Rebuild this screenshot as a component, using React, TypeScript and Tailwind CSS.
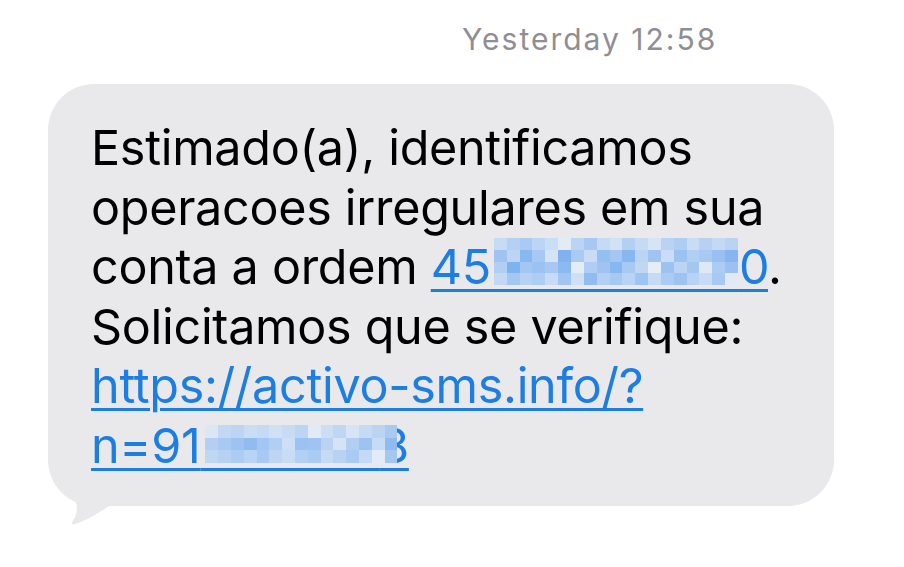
const LINK = '#1c7de3'

const MOSAIC_A = [
  ['#c6dcf6', '#b4d0f3', '#a9caf3', '#bcd5f4', '#c9ddf6', '#e3ebf4', '#bcd4f3', '#a7c8f2', '#c5dbf5', '#d2e2f5', '#b3cff3', '#c4daf5', '#d6e4f5', '#b9d3f4', '#aecdf3', '#c9dcf5', '#b7d1f3', '#c3d9f5', '#bad3f3'],
  ['#9fc4f2', '#bdd5f4', '#88b8f0', '#a6c8f2', '#d5e3f5', '#7fb2ef', '#a9caf3', '#cadcf5', '#94bff1', '#a3c6f2', '#86b7f0', '#bcd4f4', '#a0c4f2', '#cadcf6', '#9cc2f1', '#b1cef3', '#a7c9f2', '#98c0f1', '#86b6ef'],
  ['#b1cef3', '#7fb3f0', '#a3c6f2', '#9bc2f1', '#a6c8f2', '#8cbaf0', '#e4ecf5', '#b0cdf3', '#9fc4f2', '#86b7f0', '#a8c9f2', '#c0d7f4', '#e6edf5', '#9cc2f1', '#bcd4f4', '#a4c7f2', '#dfe9f5', '#acccf3', '#9ac1f1'],
  ['#c2d8f5', '#a4c7f2', '#b6d1f3', '#aecdf3', '#c7dbf5', '#a1c5f2', '#cfe0f5', '#90bcf0', '#b4cff3', '#a6c8f2', '#b9d3f4', '#a0c4f2', '#c4daf5', '#aacbf3', '#9ec3f2', '#b8d2f3', '#c7dbf5', '#a8c9f2', '#e0e9f5'],
]

const MOSAIC_B = [
  ['#dbe7f5', '#c2d8f5', '#bcd5f4', '#c9ddf6', '#c5dbf5', '#d1e1f5', '#c7dbf5', '#bdd5f4', '#e1eaf5', '#cbdef5', '#c0d7f4', '#d6e4f5', '#c4daf5', '#bcd4f4', '#a7c9f2'],
  ['#b4cff3', '#a7c9f2', '#9ec3f2', '#90bcf0', '#a3c6f2', '#b1cef3', '#cddff6', '#9cc2f1', '#a0c4f2', '#bad3f3', '#d5e3f5', '#b2cef3', '#9dc3f2', '#c6dbf5', '#8ebbf0'],
  ['#c0d7f4', '#b7d1f3', '#acccf3', '#b9d3f4', '#a8c9f2', '#bed6f4', '#c8dcf5', '#b3cff3', '#aacbf3', '#c5dbf5', '#b9d2f3', '#a9caf3', '#c4daf5', '#e3ebf5', '#a3c6f2'],
]

// pixelated block laid over the hidden digits
function Mosaic({ rows, className }: { rows: string[][]; className: string }) {
  return (
    <span className={`absolute flex flex-col ${className}`}>
      {rows.map((r, i) => (
        <span key={i} className="flex flex-1">
          {r.map((c, j) => (
            <span key={j} className="block h-full flex-1" style={{ backgroundColor: c }} />
          ))}
        </span>
      ))}
    </span>
  )
}

function Link({ children }: { children: React.ReactNode }) {
  return (
    <span
      className="underline decoration-[3px] underline-offset-[5px]"
      style={{ color: LINK, textDecorationColor: LINK }}
    >
      {children}
    </span>
  )
}

export default function App() {
  return (
    <div
      className="h-[567px] w-[904px] overflow-hidden bg-white"
      style={{ fontFamily: 'Inter, "Noto Sans", sans-serif' }}
    >
      <div className="pl-[462px] pt-[21px] text-[30px] leading-[36px] tracking-[2px] text-[#8e8e93]">
        Yesterday 12:58
      </div>

      <div className="relative ml-[48px] mt-[27px] w-[786px]">
        <div className="relative z-10 rounded-[46px] bg-[#e9e9eb] pb-[30px] pl-[43px] pt-[34px]">
          <div className="whitespace-nowrap text-[48.5px] leading-[59.6px] tracking-[-0.3px] text-black">
            Estimado(a), identificamos
            <br />
            operacoes irregulares em sua
            <br />
            conta a ordem{' '}
            <Link>
              45
              <span className="relative text-transparent tracking-[0.4px]">
                00000000
                <Mosaic rows={MOSAIC_A} className="left-[3px] top-[1px] h-[47px] w-[244px]" />
              </span>
              0
            </Link>
            .
            <br />
            Solicitamos que se verifique:
            <br />
            <Link>https://activo-sms.info/?</Link>
            <br />
            <Link>
              n=91
              <span className="relative">
                <span className="text-transparent tracking-[-0.8px]">000000</span>8
                <Mosaic rows={MOSAIC_B} className="left-[5px] top-[9px] h-[38px] w-[192px]" />
              </span>
            </Link>
          </div>
        </div>
        <svg
          className="absolute left-[4px] top-[382px]"
          width="80"
          height="60"
          viewBox="0 0 80 60"
        >
          <path
            d="M4 0 C4 20 14 30 24 36 C26 44 24 52 20 56 C19 58 21 59 23 58 C36 54 48 46 60 38 L80 36 L80 0 Z"
            fill="#e9e9eb"
          />
        </svg>
      </div>
    </div>
  )
}
